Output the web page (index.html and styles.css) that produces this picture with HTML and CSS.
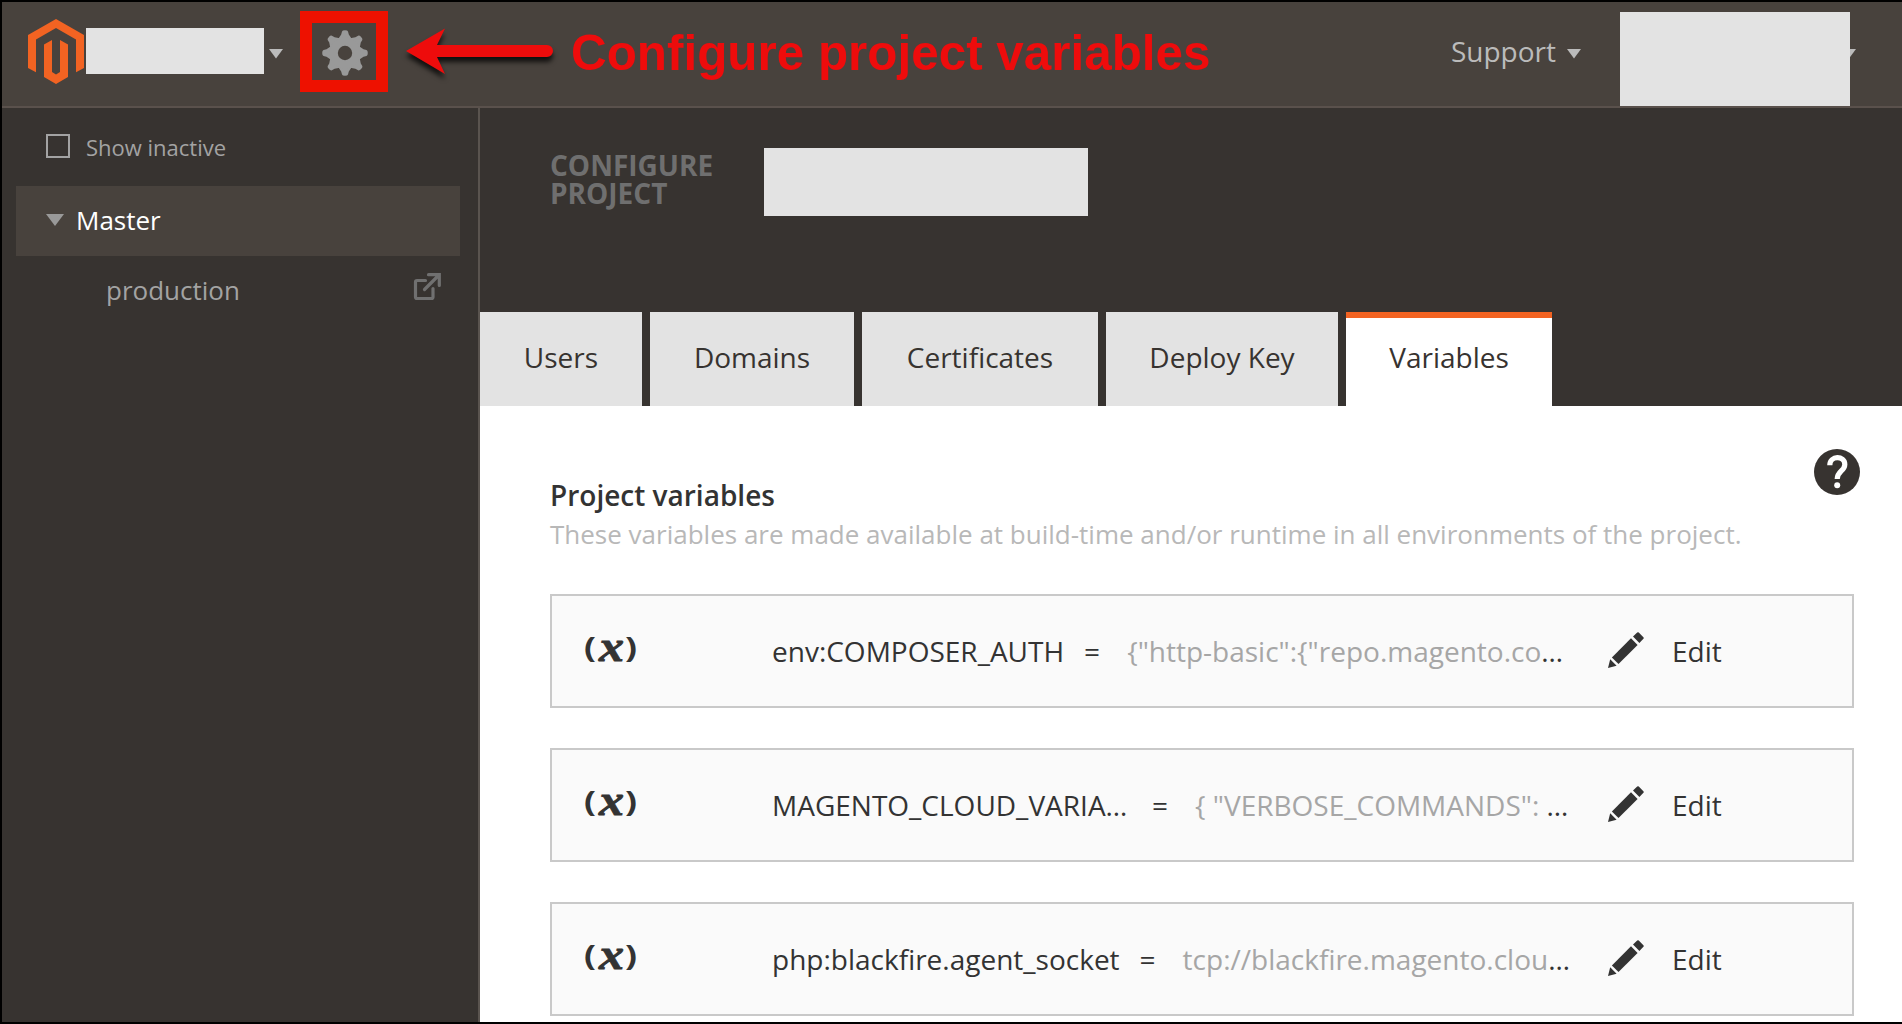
FILE: index.html
```html
<!DOCTYPE html>
<html lang="en">
<head>
<meta charset="utf-8">
<title>Configure project</title>
<link rel="stylesheet" href="styles.css">
</head>
<body>
<svg class="defs" width="0" height="0" aria-hidden="true">
  <symbol id="pencil" viewBox="0 0 36 36">
    <path d="M0 36 L2.2 27.2 L8.6 33.8 Z"/>
    <path d="M3.9 25.4 L23 6.3 L29.6 12.9 L10.5 32 Z"/>
    <path d="M25 4.4 L29.2 .6 Q30 0 30.8 .6 L35.4 5.2 Q36.2 6 35.4 6.8 L31.4 11 Z"/>
  </symbol>
  <symbol id="caret" viewBox="0 0 14 10"><path d="M0 0H14L7 9.5Z"/></symbol>
</svg>
<div class="app">
  <header class="topbar">
    <svg class="logo" viewBox="0 0 56 65"><path d="M28 0L56 16V49L48 53.2V20.5L28 9L8 20.5V53.2L0 49V16Z"/><path d="M16 25.5L24 21V53L28 55.5L32 53V21L40 25.5V58L28 65L16 58Z"/></svg>
    <div class="blank project-name"></div>
    <svg class="caret project-caret"><use href="#caret"/></svg>
    <div class="gear-box">
      <svg class="gear" viewBox="-23 -23 46 46">
        <path id="tooth" d="M-7.5 -13L-3.8 -18.5L-3 -21.5Q-2.6 -22.8 0 -22.8T3 -21.5L3.8 -18.5L7.5 -13V13L3.8 18.5L3 21.5Q2.6 22.8 0 22.8T-3 21.5L-3.8 18.5L-7.5 13Z"/>
        <use href="#tooth" transform="rotate(45)"/>
        <use href="#tooth" transform="rotate(90)"/>
        <use href="#tooth" transform="rotate(135)"/>
        <circle r="15.5"/>
        <circle class="hole" r="7.2"/>
      </svg>
    </div>
    <div class="spacer"></div>
    <span class="support">Support</span>
    <svg class="caret support-caret"><use href="#caret"/></svg>
    <div class="blank account"></div>
    <svg class="caret account-caret"><use href="#caret"/></svg>
    <div class="callout">
      <svg class="arrow" viewBox="0 0 152 60"><path d="M3 28L42 5.5L34 22H144A6 6 0 0 1 144 34H34L42 51Z"/></svg>
      <span>Configure project variables</span>
    </div>
  </header>
  <div class="body">
    <aside class="sidebar">
      <label class="inactive"><span class="box"></span>Show inactive</label>
      <div class="env env-active">
        <svg class="toggle" viewBox="0 0 18 12"><path d="M0 0H18L9 12Z"/></svg>
        <span>Master</span>
      </div>
      <div class="env env-child">
        <span>production</span>
        <svg class="external" viewBox="0 0 27 27"><path d="M11.5 7.5H3Q1.5 7.5 1.5 9V24Q1.5 25.5 3 25.5H17.5Q19 25.5 19 24V15.5M14.5 1.7H25.3V12.5M25 2L10.5 16.5"/></svg>
      </div>
    </aside>
    <main class="main">
      <div class="heading">
        <h1>Configure project</h1>
        <div class="blank title-name"></div>
      </div>
      <nav class="tabs">
        <a class="tab tab-users">Users</a>
        <a class="tab tab-domains">Domains</a>
        <a class="tab tab-certs">Certificates</a>
        <a class="tab tab-key">Deploy Key</a>
        <a class="tab tab-vars tab-active">Variables</a>
      </nav>
      <section class="panel">
        <div class="intro">
          <div>
            <h2>Project variables</h2>
            <p>These variables are made available at build-time and/or runtime in all environments of the project.</p>
          </div>
          <svg class="help" viewBox="0 0 46 46"><circle cx="23" cy="23" r="23"/><path d="M15.8 16.2C15.8 6.2 30.8 6.4 30.8 15.4C30.8 22 23.2 22 23.2 30"/><circle class="dot" cx="23.2" cy="36.2" r="3"/></svg>
        </div>
        <div class="card">
          <svg class="var" viewBox="0 0 54 32"><text class="paren" x="0" y="24" textLength="12" lengthAdjust="spacingAndGlyphs">(</text><text class="ex" x="15" y="26.5" textLength="25" lengthAdjust="spacingAndGlyphs">x</text><text class="paren" x="41" y="24" textLength="12" lengthAdjust="spacingAndGlyphs">)</text></svg>
          <div class="pair"><span class="name">env:COMPOSER_AUTH</span><span class="eq">=</span><span><span class="value">{"http-basic":{"repo.magento.co</span>…</span></div>
          <svg class="pencil"><use href="#pencil"/></svg>
          <span class="edit">Edit</span>
        </div>
        <div class="card">
          <svg class="var" viewBox="0 0 54 32"><text class="paren" x="0" y="24" textLength="12" lengthAdjust="spacingAndGlyphs">(</text><text class="ex" x="15" y="26.5" textLength="25" lengthAdjust="spacingAndGlyphs">x</text><text class="paren" x="41" y="24" textLength="12" lengthAdjust="spacingAndGlyphs">)</text></svg>
          <div class="pair"><span class="name name-cut">MAGENTO_CLOUD_VARIA…</span><span class="eq">=</span><span><span class="value">{ "VERBOSE_COMMANDS": </span>…</span></div>
          <svg class="pencil"><use href="#pencil"/></svg>
          <span class="edit">Edit</span>
        </div>
        <div class="card">
          <svg class="var" viewBox="0 0 54 32"><text class="paren" x="0" y="24" textLength="12" lengthAdjust="spacingAndGlyphs">(</text><text class="ex" x="15" y="26.5" textLength="25" lengthAdjust="spacingAndGlyphs">x</text><text class="paren" x="41" y="24" textLength="12" lengthAdjust="spacingAndGlyphs">)</text></svg>
          <div class="pair"><span class="name">php:blackfire.agent_socket</span><span class="eq">=</span><span><span class="value">tcp://blackfire.magento.clou</span>…</span></div>
          <svg class="pencil"><use href="#pencil"/></svg>
          <span class="edit">Edit</span>
        </div>
      </section>
    </main>
  </div>
</div>
</body>
</html>
```
FILE: styles.css
```css
* { box-sizing: border-box; }

body {
  margin: 0;
  font-family: "Open Sans", "Noto Sans", sans-serif;
  font-size: 28px;
  color: #333;
}

svg { display: block; flex: none; overflow: visible; }
.defs { position: absolute; }

.app {
  display: flex;
  flex-direction: column;
  height: 1024px;
  overflow: hidden;
  border: 2px solid #000;
  border-right: 0;
  background: #373330;
}

.blank { flex: none; background: #e3e3e3; }

/* Top bar */
.topbar {
  position: relative;
  display: flex;
  align-items: center;
  flex: none;
  height: 106px;
  padding: 0 46px 6px 26px;
  border-bottom: 2px solid #5a514c;
  background: #48423d;
}
.logo { width: 56px; height: 65px; fill: #f26322; }
.project-name { width: 178px; height: 46px; margin-left: 2px; }
.caret { width: 14px; height: 10px; fill: #bbb; }
.project-caret { margin: 5px 0 0 5px; }
.gear-box {
  display: flex;
  align-items: center;
  justify-content: center;
  width: 88px;
  height: 81px;
  margin-left: 17px;
  border: 12px solid #ee1100;
}
.gear { width: 46px; height: 46px; margin: 3px 0 0 2px; fill: #999; }
.gear .hole { fill: #48423d; }
.spacer { flex: 1; }
.support { color: #bbb; line-height: 38px; }
.support-caret { margin: 5px 39px 0 11px; }
.account { z-index: 1; align-self: flex-start; width: 230px; height: 94px; margin-top: 10px; }
.account-caret { margin: 5px 0 0 -8px; }

/* Annotation laid over the bar */
.callout {
  position: absolute;
  left: 401px;
  top: 0;
  display: flex;
  color: #ee0c0c;
  font: bold 49.4px/101px "Liberation Sans", Arial, sans-serif;
  white-space: nowrap;
}
.arrow {
  width: 152px;
  height: 60px;
  margin: 21px 16px 0 0;
  fill: #ee0c0c;
  filter: drop-shadow(0 5px 2.5px rgba(0, 0, 0, .75));
}

/* Sidebar */
.body { display: flex; flex: 1; min-height: 0; }
.sidebar {
  flex: none;
  width: 478px;
  padding: 24px 18px 0 14px;
  border-right: 2px solid #5a544f;
  color: #a3a3a3;
  font-size: 26px;
}
.inactive {
  display: flex;
  align-items: center;
  height: 30px;
  margin-bottom: 24px;
  padding-left: 30px;
  font-size: 22px;
}
.box { width: 24px; height: 24px; margin: -2px 16px 0 0; border: 2px solid #a3a3a3; }
.env { display: flex; align-items: center; height: 70px; padding-bottom: 2px; }
.env-active { padding-left: 30px; background: #48423d; color: #fff; }
.toggle { width: 18px; height: 12px; margin: 0 12px 0 0; fill: #999; }
.env-child { justify-content: space-between; padding: 0 19px 2px 90px; }
.external {
  width: 27px;
  height: 27px;
  margin-top: -7px;
  fill: none;
  stroke: #707070;
  stroke-width: 3.2;
  stroke-linecap: round;
}

/* Main column */
.main { display: flex; flex-direction: column; flex: 1; min-width: 0; }
.heading { display: flex; flex: none; height: 204px; padding: 40px 0 0 70px; }
h1 {
  width: 214px;
  margin: 3px 0 0;
  padding-right: 30px;
  color: #6f6f6f;
  font-size: 28px;
  font-weight: 700;
  line-height: 28px;
  text-transform: uppercase;
}
.title-name { width: 324px; height: 68px; }

.tabs { display: flex; flex: none; gap: 8px; height: 94px; }
.tab { background: #e3e3e3; color: #373330; line-height: 90px; text-align: center; }
.tab-users { width: 162px; }
.tab-domains { width: 204px; }
.tab-certs { width: 236px; }
.tab-key { width: 232px; }
.tab-vars { width: 206px; }
.tab-active { border-top: 6px solid #f26322; background: #fff; line-height: 78px; }

.panel { flex: 1; padding: 42px 48px 0 70px; background: #fff; }
.intro { display: flex; justify-content: space-between; height: 146px; margin-right: -6px; }
h2 { margin: 28px 0 0; font-size: 28px; font-weight: 600; line-height: 38px; }
p { margin: 2px 0 0; color: #b8b8b8; font-size: 26px; line-height: 36px; white-space: nowrap; }
.help { width: 46px; height: 46px; margin-top: 1px; fill: #373330; }
.help path { fill: none; stroke: #fff; stroke-width: 5.2; }
.help .dot { fill: #fff; }

.card {
  display: flex;
  align-items: center;
  height: 114px;
  margin-bottom: 40px;
  border: 2px solid #c9c9c9;
  background: #fafafa;
}
.var { width: 54px; height: 32px; margin: -3px 134px 0 32px; fill: #333; }
.paren { font: 700 29px "Open Sans", sans-serif; }
.ex { font: italic 700 45px "Liberation Serif", serif; stroke: #333; stroke-width: .9px; }
.pair { display: flex; width: 836px; white-space: pre; }
.eq { margin: 0 27px 0 20px; }
.name-cut { width: 360px; }
.value { color: #a6a6a6; }
.pencil { width: 36px; height: 36px; margin-top: -2px; fill: #333; }
.edit { margin-left: 28px; }
```
